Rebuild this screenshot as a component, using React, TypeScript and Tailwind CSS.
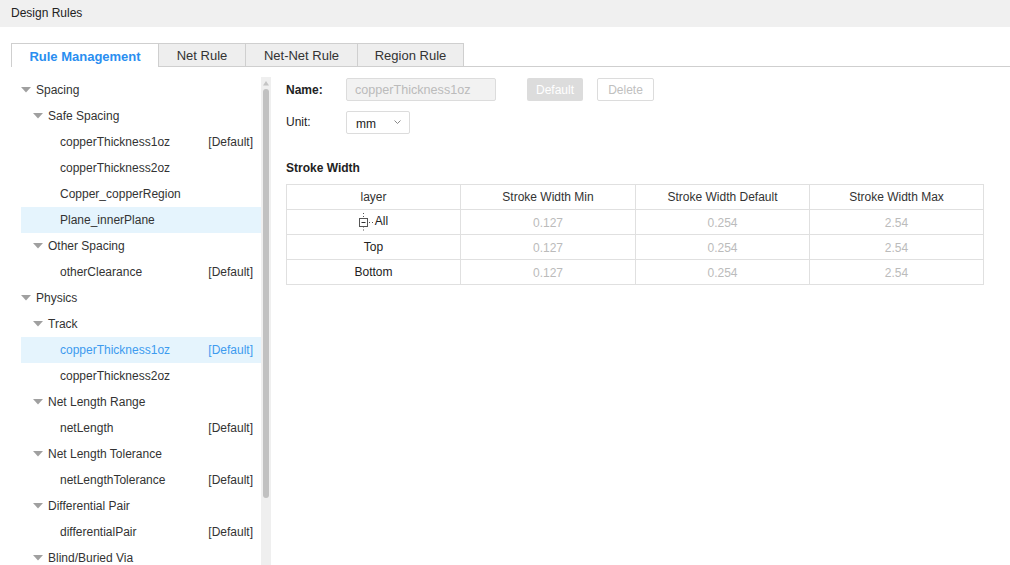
import React from "react";

type TreeRow = {
    label: string;
    level: 0 | 1 | 2;
    isDefault?: boolean;
    hover?: boolean;
    selected?: boolean;
};

const treeRows: TreeRow[] = [
    { label: "Spacing", level: 0 },
    { label: "Safe Spacing", level: 1 },
    { label: "copperThickness1oz", level: 2, isDefault: true },
    { label: "copperThickness2oz", level: 2 },
    { label: "Copper_copperRegion", level: 2 },
    { label: "Plane_innerPlane", level: 2, hover: true },
    { label: "Other Spacing", level: 1 },
    { label: "otherClearance", level: 2, isDefault: true },
    { label: "Physics", level: 0 },
    { label: "Track", level: 1 },
    { label: "copperThickness1oz", level: 2, isDefault: true, selected: true },
    { label: "copperThickness2oz", level: 2 },
    { label: "Net Length Range", level: 1 },
    { label: "netLength", level: 2, isDefault: true },
    { label: "Net Length Tolerance", level: 1 },
    { label: "netLengthTolerance", level: 2, isDefault: true },
    { label: "Differential Pair", level: 1 },
    { label: "differentialPair", level: 2, isDefault: true },
    { label: "Blind/Buried Via", level: 1 },
];

const tableRows = [
    { layer: "All", min: "0.127", def: "0.254", max: "2.54", expander: true },
    { layer: "Top", min: "0.127", def: "0.254", max: "2.54" },
    { layer: "Bottom", min: "0.127", def: "0.254", max: "2.54" },
];

const Caret = () => (
    <svg width="10" height="6" viewBox="0 0 10 6" className="shrink-0">
        <path d="M0 0 L10 0 L5 5.5 Z" fill="#a0a0a0" />
    </svg>
);

const Expander = () => (
    <svg width="14" height="18" viewBox="0 0 14 18" className="shrink-0">
        <path d="M4.5 0 V4.5 M4.5 13.5 V18" stroke="#555" strokeWidth="1" strokeDasharray="1 2" />
        <rect x="0.5" y="5.5" width="8" height="8" fill="white" stroke="#555" />
        <path d="M2.5 9.5 H6.5" stroke="#333" />
        <path d="M10 9.5 H14" stroke="#555" strokeDasharray="1 2" />
    </svg>
);

const tabs = ["Net Rule", "Net-Net Rule", "Region Rule"];
const tabWidths = ["w-[87px]", "w-[112px]", "w-[106px]"];

export default function App() {
    return (
        <div className="w-[1010px] h-[565px] overflow-hidden bg-white flex flex-col font-['Liberation_Sans',Arial,sans-serif] text-[12px] text-[#333]">
            {/* title bar */}
            <div className="h-[27px] shrink-0 bg-[#f0f0f0] pl-[11px] pb-[2px] flex items-center text-[#222]">
                Design Rules
            </div>

            {/* tabs */}
            <div className="flex items-end h-[24px] mt-[16px] pl-[11px] shrink-0">
                <div className="w-[148px] h-[24px] pt-[2px] bg-white border border-b-0 border-[#cfcfcf] flex items-center justify-center text-[13px] font-bold text-[#2a8ef0]">
                    Rule Management
                </div>
                {tabs.map((t, i) => (
                    <div
                        key={t}
                        className={`${tabWidths[i]} h-[24px] pt-[2px] bg-[#eeeeee] border-t border-r border-b border-[#cfcfcf] flex items-center justify-center text-[13px] text-[#333]`}
                    >
                        {t}
                    </div>
                ))}
                <div className="flex-1 border-b border-[#cfcfcf]" />
            </div>

            <div className="flex flex-1 min-h-0">
                {/* tree */}
                <div className="ml-[21px] w-[240px] pt-[10px] overflow-hidden">
                    {treeRows.map((r, i) => (
                        <div
                            key={i}
                            className={`h-[26px] flex items-center pr-[8px] ${
                                r.hover || r.selected ? "bg-[#e5f4fd]" : ""
                            } ${r.selected ? "text-[#3d9bef]" : "text-[#333]"} ${
                                r.level === 0 ? "pl-0" : r.level === 1 ? "pl-[12px]" : "pl-[39px]"
                            }`}
                        >
                            {r.level < 2 && (
                                <span className="mr-[5px] flex items-center">
                                    <Caret />
                                </span>
                            )}
                            <span className="flex-1 whitespace-nowrap">{r.label}</span>
                            {r.isDefault && <span>[Default]</span>}
                        </div>
                    ))}
                </div>

                {/* scrollbar */}
                <div className="w-[10px] mt-[10px] bg-[#efefef] flex flex-col items-center">
                    <svg width="6" height="5" viewBox="0 0 6 5" className="mt-[4px]">
                        <path d="M0 4.5 L6 4.5 L3 0 Z" fill="#c4c4c4" />
                    </svg>
                    <div className="w-[6px] h-[409px] mt-[3px] rounded-[3px] bg-[#c1c1c1]" />
                </div>

                {/* right panel */}
                <div className="flex-1 pl-[15px] pt-[11px]">
                    <div className="flex items-center h-[23px]">
                        <span className="w-[60px] font-bold text-[#222]">Name:</span>
                        <div className="w-[150px] h-[23px] bg-[#f2f2f2] border border-[#dcdcdc] rounded-[2px] flex items-center pl-[8px] pt-[1px] text-[12.6px] text-[#bbbbbb]">
                            copperThickness1oz
                        </div>
                        <div className="ml-[31px] w-[56px] h-[23px] bg-[#dcdcdc] rounded-[2px] flex items-center justify-center text-white">
                            Default
                        </div>
                        <div className="ml-[14px] w-[57px] h-[23px] border border-[#dcdcdc] rounded-[2px] flex items-center justify-center text-[#c0c0c0]">
                            Delete
                        </div>
                    </div>

                    <div className="flex items-center h-[23px] mt-[10px]">
                        <span className="w-[60px] text-[#222] -mt-[2px]">Unit:</span>
                        <div className="w-[64px] h-[23px] border border-[#dcdcdc] rounded-[2px] flex items-center pl-[9px] pr-[8px] text-[#222]">
                            <span className="flex-1 mt-[2px]">mm</span>
                            <svg width="7" height="5" viewBox="0 0 7 5">
                                <path d="M0.5 0.5 L3.5 3.5 L6.5 0.5" stroke="#888" fill="none" strokeWidth="1" />
                            </svg>
                        </div>
                    </div>

                    <div className="mt-[27px] font-bold text-[#222] leading-[14px]">Stroke Width</div>

                    <table className="mt-[9px] w-[697px] border-collapse table-fixed">
                        <thead>
                            <tr className="h-[25px]">
                                <th className="w-[174px] border border-[#e0e0e0] font-normal text-[#333]">layer</th>
                                <th className="w-[175px] border border-[#e0e0e0] font-normal text-[#333]">Stroke Width Min</th>
                                <th className="w-[174px] border border-[#e0e0e0] font-normal text-[#333]">Stroke Width Default</th>
                                <th className="w-[174px] border border-[#e0e0e0] font-normal text-[#333]">Stroke Width Max</th>
                            </tr>
                        </thead>
                        <tbody>
                            {tableRows.map((r) => (
                                <tr key={r.layer} className="h-[25px]">
                                    <td className="border border-[#e0e0e0] p-0 text-[#222]">
                                        <div className="flex items-center justify-center gap-[2px]">
                                            {r.expander && <Expander />}
                                            <span className={r.expander ? "-mt-[2px]" : ""}>{r.layer}</span>
                                        </div>
                                    </td>
                                    <td className="border border-[#e0e0e0] text-center text-[#bbbbbb] pt-[2px]">{r.min}</td>
                                    <td className="border border-[#e0e0e0] text-center text-[#bbbbbb] pt-[2px]">{r.def}</td>
                                    <td className="border border-[#e0e0e0] text-center text-[#bbbbbb] pt-[2px]">{r.max}</td>
                                </tr>
                            ))}
                        </tbody>
                    </table>
                </div>
            </div>
        </div>
    );
}
